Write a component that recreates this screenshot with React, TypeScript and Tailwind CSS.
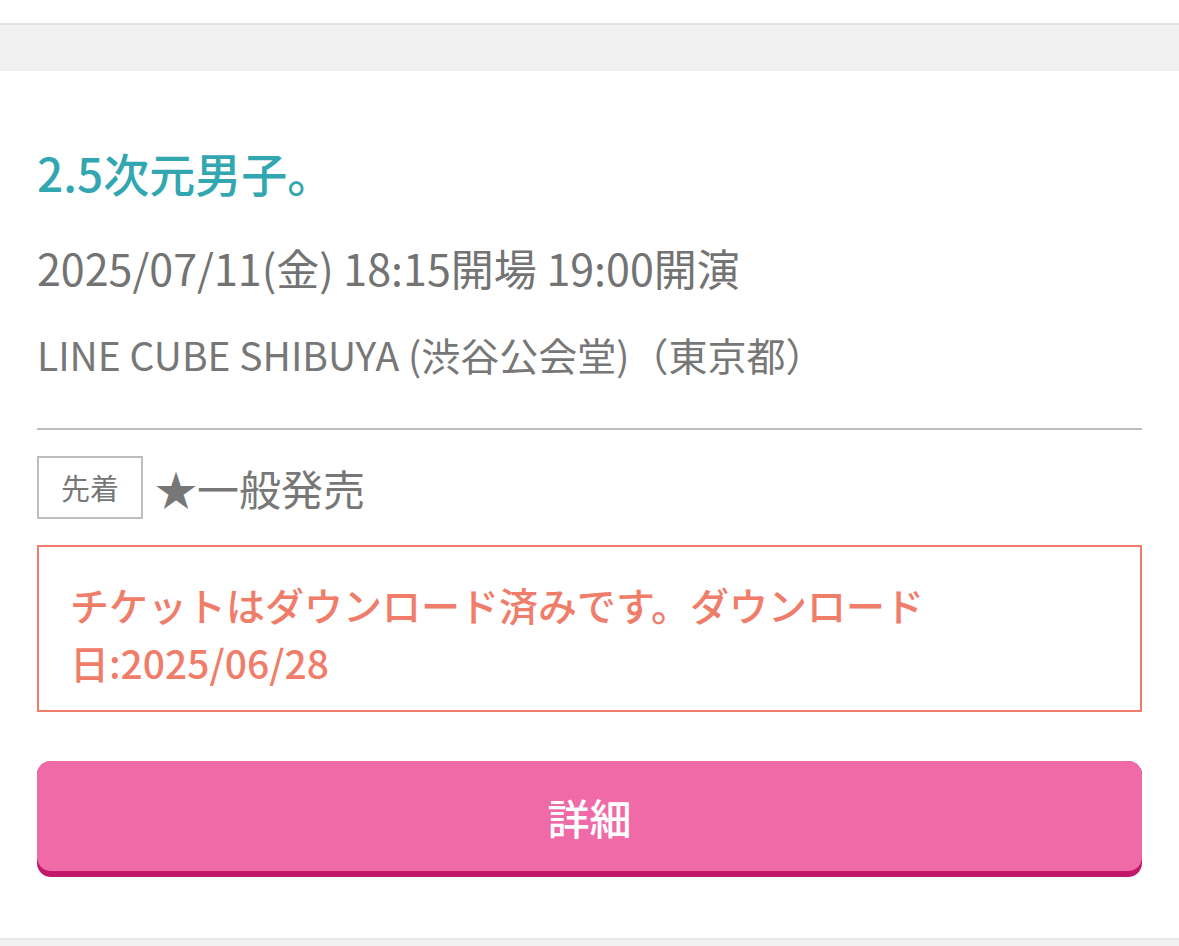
import React from "react";

export default function App() {
  const font = { fontFamily: '"Noto Sans CJK JP", "Noto Sans", sans-serif' };
  return (
    <div className="w-[1179px] h-[946px] overflow-hidden bg-white" style={font}>
      <div className="h-[23px] bg-white" />
      <div className="h-[48px] bg-[#f1f1f1] border-t-2 border-[#e2e2e2]" />
      <div className="bg-white px-[37px] pt-[71px] pb-[61px]">
        <div className="text-[46px] leading-[60px] text-[#33a7b1] font-medium">2.5次元男子。</div>
        <div className="mt-[40px] text-[43px] leading-[50px] text-[#737373] whitespace-nowrap">
          2025/07/11(金) 18:15開場 19:00開演
        </div>
        <div className="mt-[37px] text-[39px] leading-[50px] text-[#777777] whitespace-nowrap">
          LINE CUBE SHIBUYA (渋谷公会堂)（東京都）
        </div>
        <div className="mt-[49px] h-[2px] bg-[#bdbdbd]" />
        <div className="mt-[26px] flex items-center gap-[12px]">
          <div className="w-[106px] h-[63px] border-2 border-[#bdbdbd] flex items-center justify-center text-[29px] text-[#777777]">
            先着
          </div>
          <div className="text-[42px] text-[#777777] leading-[50px]">★一般発売</div>
        </div>
        <div className="mt-[26px] h-[167px] border-2 border-[#f07c6a] pl-[31px] pt-[28px] text-[39px] leading-[58px] text-[#f07c6a] font-medium whitespace-nowrap">
          チケットはダウンロード済みです。ダウンロード
          <br />
          日:2025/06/28
        </div>
        <div className="mt-[49px] h-[116px] rounded-[14px] bg-[#c2186b] pb-[6px]">
          <div className="h-[110px] rounded-[14px] bg-[#f06aa8] flex items-center justify-center text-white text-[42px] font-medium">
            詳細
          </div>
        </div>
      </div>
      <div className="h-[20px] bg-[#f1f1f1] border-t-2 border-[#e8e8e8]" />
    </div>
  );
}
